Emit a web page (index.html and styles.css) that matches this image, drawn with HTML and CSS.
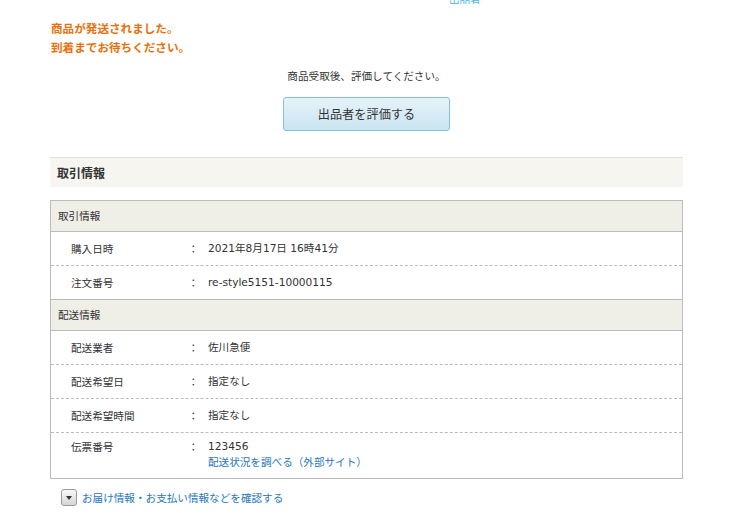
FILE: index.html
```html
<!DOCTYPE html>
<html lang="ja">
<head>
<meta charset="utf-8">
<link rel="stylesheet" href="styles.css">
</head>
<body>
<div class="page">
  <div class="topcut"><a class="toplink" href="#">出品者</a></div>
  <div class="notice">
    <p>商品が発送されました。</p>
    <p>到着までお待ちください。</p>
  </div>
  <p class="guide">商品受取後、評価してください。</p>
  <div class="btnwrap"><button class="btn">出品者を評価する</button></div>

  <h2 class="section-title">取引情報</h2>

  <div class="info">
    <div class="info-head">取引情報</div>
    <div class="row"><span class="lbl">購入日時</span><span class="colon">：</span><span class="val">2021年8月17日 16時41分</span></div>
    <div class="row dashed"><span class="lbl">注文番号</span><span class="colon">：</span><span class="val">re-style5151-10000115</span></div>
    <div class="info-head">配送情報</div>
    <div class="row"><span class="lbl">配送業者</span><span class="colon">：</span><span class="val">佐川急便</span></div>
    <div class="row dashed"><span class="lbl">配送希望日</span><span class="colon">：</span><span class="val">指定なし</span></div>
    <div class="row dashed"><span class="lbl">配送希望時間</span><span class="colon">：</span><span class="val">指定なし</span></div>
    <div class="row dashed tall"><span class="lbl">伝票番号</span><span class="colon">：</span><span class="val">123456<br><a href="#" class="link">配送状況を調べる（外部サイト）</a></span></div>
  </div>

  <div class="toggle">
    <span class="toggle-btn"><span class="tri"></span></span>
    <a href="#" class="link">お届け情報・お支払い情報などを確認する</a>
  </div>
</div>
</body>
</html>
```
FILE: styles.css
```css
html, body {
  margin: 0;
  padding: 0;
  background: #fff;
}
body {
  font-family: "Noto Sans CJK JP", "Liberation Sans", sans-serif;
  color: #333;
  font-size: 10.6px;
}
.page {
  width: 633px;
  margin-left: 50px;
}
.topcut {
  height: 4px;
  overflow: hidden;
  position: relative;
}
.toplink {
  position: absolute;
  left: 399px;
  bottom: -2px;
  line-height: 12px;
  font-size: 10.6px;
  color: #45b6e2;
  text-decoration: none;
}
.notice {
  padding-top: 15px;
  padding-left: 1px;
}
.notice p {
  margin: 0;
  font-size: 11.6px;
  font-weight: bold;
  line-height: 19px;
  color: #e8710c;
}
.guide {
  margin: 11px 0 0;
  text-align: center;
  font-size: 10.6px;
  line-height: 16px;
  color: #333;
}
.btnwrap {
  display: flex;
  justify-content: center;
  margin-top: 13px;
}
.btn {
  width: 167px;
  height: 34px;
  border: 1px solid #86c0d6;
  border-radius: 3px;
  background: linear-gradient(#e6f3f9, #c9e5f1);
  font-family: inherit;
  font-size: 12.2px;
  color: #333;
  padding: 0;
}
.section-title {
  margin: 26px 0 0;
  height: 29px;
  border-top: 1px solid #e2e2dc;
  background: #f6f5f0;
  font-size: 12px;
  font-weight: bold;
  line-height: 29px;
  padding-left: 7px;
  color: #333;
}
.info {
  margin-top: 13px;
  border: 1px solid #bbb;
}
.info-head {
  height: 30px;
  line-height: 30px;
  background: #efeee7;
  border-bottom: 1px solid #bbb;
  padding-left: 7px;
  font-size: 10.6px;
}
.row + .info-head { border-top: 1px solid #bbb; }
.row {
  display: flex;
  height: 33px;
  align-items: center;
  font-size: 10.6px;
}
.row.dashed {
  border-top: 1px dashed #bbb;
}
.lbl {
  width: 117px;
  padding-left: 20px;
}
.colon {
  width: 20px;
}
.val {
  font-family: "DejaVu Sans", "Noto Sans CJK JP", sans-serif;
  font-size: 10.6px;
  line-height: 15px;
}
.val .link {
  font-family: "Noto Sans CJK JP", sans-serif;
  font-size: 10.6px;
}
.row.tall {
  height: 46px;
  align-items: flex-start;
  padding-top: 6px;
  box-sizing: border-box;
}
.link {
  color: #2677bd;
  text-decoration: none;
}
.toggle {
  display: flex;
  align-items: center;
  gap: 5px;
  margin-top: 10px;
  padding-left: 11px;
  font-size: 10.6px;
}
.toggle-btn {
  width: 16px;
  height: 17px;
  border: 1px solid #9a9a9a;
  border-radius: 3px;
  background: linear-gradient(#f8f8f8, #d6d6d6);
  display: flex;
  align-items: center;
  justify-content: center;
  box-sizing: border-box;
}
.tri {
  width: 0;
  height: 0;
  border-left: 3px solid transparent;
  border-right: 3px solid transparent;
  border-top: 4px solid #333;
}
```
